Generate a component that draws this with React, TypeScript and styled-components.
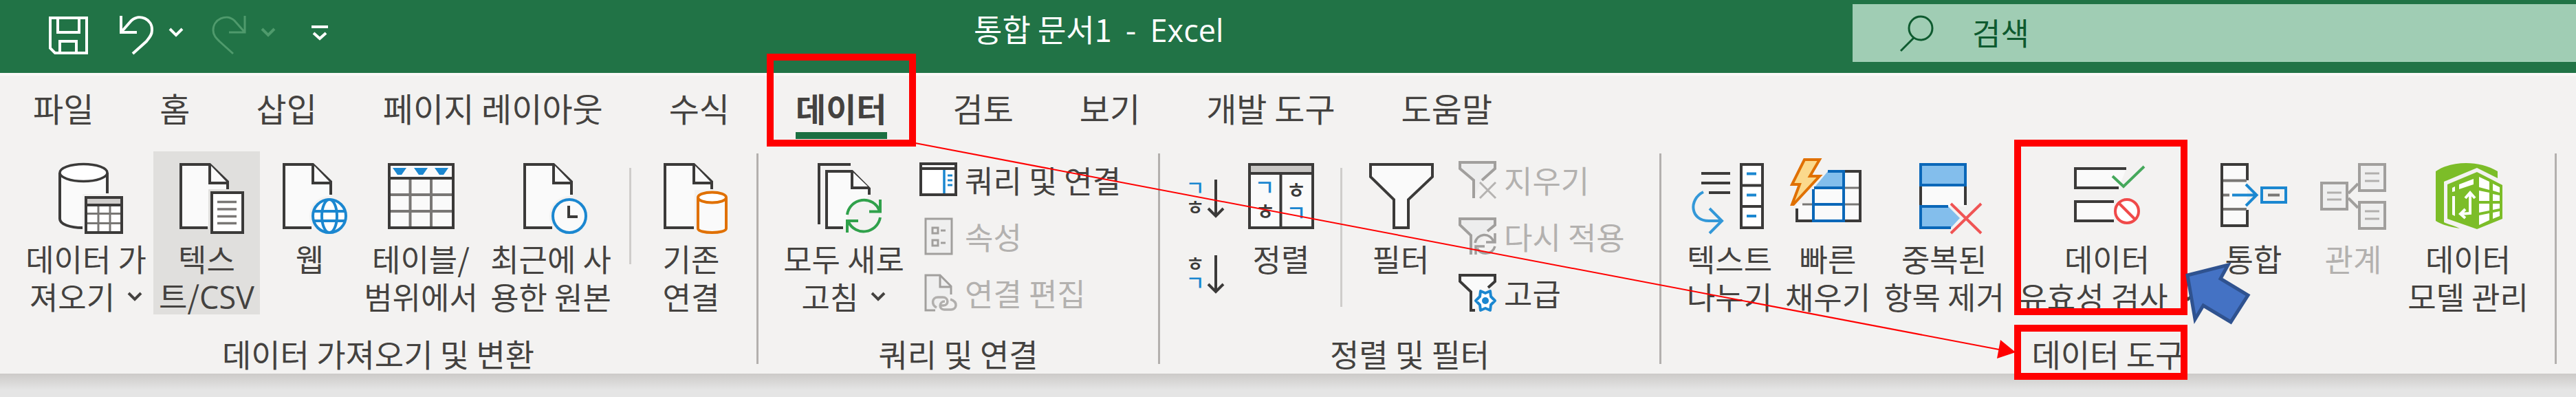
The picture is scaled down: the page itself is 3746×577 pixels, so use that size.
import React from "react";
import styled, { createGlobalStyle } from "styled-components";

const ink = "#3b3a39";
const grey = "#797775";
const faded = "#a19f9d";
const blue = "#1b87d0";
const deepBlue = "#0a67b8";
const skyFill = "#83beec";
const paper = "#fafafa";
const orange = "#e07000";
const fontStack = `"Noto Sans CJK KR", "Noto Sans", sans-serif`;

const GlobalStyle = createGlobalStyle`
  * { box-sizing: border-box; }
  body { margin: 0; background: #e5e5e5; font-family: ${fontStack}; overflow-x: hidden; }
  button, input { font: inherit; color: inherit; border: 0; padding: 0; margin: 0; background: none; }
  svg { display: block; flex: none; overflow: visible; }
`;

/* ---------- shell ---------- */

const Page = styled.div`
  position: relative;
  color: #444240;
`;

const TitleBar = styled.header`
  display: flex;
  align-items: flex-start;
  height: 106px;
  background: #217346;
  color: #fff;
`;

const QuickAccess = styled.div`
  display: flex;
  align-items: flex-start;
  padding: 22px 0 0 70px;
  width: 1416px;
`;

const QuickButton = styled.button<{ $gap?: number; $dim?: boolean }>`
  display: flex;
  margin-right: ${(p) => p.$gap ?? 0}px;
  color: ${(p) => (p.$dim ? "#4f9a6c" : "#fff")};
`;

const ChevronSlot = styled.span`
  display: flex;
  padding-top: 18px;
`;

const CustomizeSlot = styled.span`
  display: flex;
  padding-top: 14px;
`;

const Title = styled.h1`
  margin: 0;
  padding-top: 14px;
  flex: 1;
  font-size: 45px;
  line-height: 56px;
  font-weight: 400;
  white-space: pre;
`;

const Latin = styled.span`
  font-family: "Liberation Sans Narrow", "Open Sans", sans-serif;
`;

const SearchBox = styled.label`
  display: flex;
  align-items: center;
  gap: 56px;
  flex: 0 1 1052px;
  height: 84px;
  margin-top: 6px;
  padding-left: 68px;
  background: #a0cdb4;
  color: #0e5a2f;
`;

const SearchInput = styled.input`
  flex: 1;
  min-width: 0;
  height: 84px;
  padding-bottom: 4px;
  font-size: 45px;
  outline: none;
  &::placeholder { color: #0e5a2f; opacity: 1; }
`;

const Tabs = styled.nav`
  display: flex;
  gap: 96px;
  height: 114px;
  padding-left: 48px;
  background: #f3f2f1;
  border-top: 4px solid #faf8f7;
`;

const Tab = styled.button<{ $active?: boolean }>`
  position: relative;
  display: flex;
  flex-direction: column;
  gap: 6px;
  padding-top: 16px;
  font-size: 48px;
  line-height: 60px;
  font-weight: ${(p) => (p.$active ? 700 : 400)};
  white-space: nowrap;
  &::after {
    content: "";
    width: 100%;
    height: 10px;
    background: ${(p) => (p.$active ? "#1a6f41" : "transparent")};
  }
`;

const Ribbon = styled.main`
  display: flex;
  align-items: flex-start;
  height: 323px;
  background: #f3f2f1;
`;

const RibbonShadow = styled.div`
  height: 24px;
  background: linear-gradient(#cccac8, #e5e5e5);
`;

const Group = styled.section<{ $start: number; $end: number }>`
  flex: none;
  padding: 0 ${(p) => p.$end}px 0 ${(p) => p.$start}px;
`;

const GroupBody = styled.div`
  display: flex;
  height: 266px;
`;

const GroupLabel = styled.h2<{ $start: number; $end: number }>`
  margin: 0 -${(p) => p.$end}px 0 -${(p) => p.$start}px;
  text-align: center;
  font-size: 46px;
  line-height: 54px;
  font-weight: 400;
  white-space: nowrap;
`;

const GroupRule = styled.div`
  flex: none;
  width: 3px;
  height: 306px;
  margin-top: 3px;
  background: #b3b0ae;
`;

const InnerRule = styled.div<{ $height: number }>`
  width: 3px;
  height: ${(p) => p.$height}px;
  margin: 24px 14px 0;
  background: #cfcdcb;
`;

const BigButton = styled.button<{ $width: number; $active?: boolean }>`
  position: relative;
  display: flex;
  flex-direction: column;
  align-items: center;
  gap: 8px;
  flex: none;
  width: ${(p) => p.$width}px;
  height: 237px;
  padding-top: 10px;
  background: ${(p) => (p.$active ? "#e0dfdd" : "transparent")};
  font-size: 45px;
  line-height: 55px;
  white-space: nowrap;
  &:disabled { color: #b3b1af; }
`;

const Line = styled.span`
  display: flex;
  align-items: center;
  justify-content: center;
  gap: 18px;
  height: 55px;
`;

const Lines = styled.span`
  display: block;
`;

const Stack = styled.div<{ $start: number; $width: number }>`
  display: flex;
  flex-direction: column;
  align-items: flex-start;
  flex: none;
  width: ${(p) => p.$width}px;
  padding-left: ${(p) => p.$start}px;
`;

const SmallButton = styled.button`
  display: flex;
  align-items: center;
  gap: 11px;
  height: 82px;
  font-size: 45px;
  line-height: 55px;
  white-space: nowrap;
  &:disabled { color: #b3b1af; }
`;

const SortStack = styled.div`
  display: flex;
  flex-direction: column;
  gap: 55px;
  flex: none;
  width: 104px;
  padding: 41px 0 0 38px;
`;

const IconButton = styled.button`
  display: flex;
  width: 55px;
  height: 55px;
`;

/* ---------- callouts drawn over the ribbon ---------- */

const TabFrame = styled.span`
  position: absolute;
  z-index: 2;
  inset: -32px -42px 7px -42px;
  border: 10px solid #f00;
  pointer-events: none;
`;

const ButtonFrame = styled.span`
  position: absolute;
  z-index: 2;
  top: -17px;
  left: 0;
  width: 252px;
  height: 255px;
  border: 10px solid #f00;
  pointer-events: none;
`;

const LabelFrame = styled.span`
  position: absolute;
  z-index: 2;
  top: 252px;
  left: 0;
  width: 252px;
  height: 80px;
  border: 10px solid #f00;
  pointer-events: none;
`;

const Pointer = styled.svg`
  position: absolute;
  z-index: 3;
  top: 158px;
  left: 246px;
  pointer-events: none;
`;

const Connector = styled.svg`
  position: absolute;
  z-index: 3;
  top: 200px;
  left: 1330px;
  pointer-events: none;
`;

/* ---------- icons ---------- */

const Chevron = () => (
  <svg width="22" height="14" viewBox="0 0 22 14" fill="none" stroke="currentColor" strokeWidth="4">
    <path d="M2 2 L11 11 L20 2" />
  </svg>
);

const QuickChevron = () => (
  <ChevronSlot>
    <Chevron />
  </ChevronSlot>
);

const Icon = ({ children }: { children: React.ReactNode }) => (
  <svg width="110" height="110" viewBox="0 0 110 110" fill="none" stroke={ink} strokeWidth="4" aria-hidden>
    {children}
  </svg>
);

const SmallIcon = ({ children, color = ink }: { children: React.ReactNode; color?: string }) => (
  <svg width="56" height="56" viewBox="0 0 56 56" fill="none" stroke={color} strokeWidth="4" aria-hidden>
    {children}
  </svg>
);

const Sheet = ({ side, foot }: { side: number; foot: number }) => (
  <>
    <path d={`M${foot} 101 H17 V9 H59 L85 34 V${side}`} fill={paper} />
    <path d="M59 9 V36 H85" fill={paper} />
  </>
);

const GetDataIcon = () => (
  <Icon>
    <path d="M17 21 V88 C17 96 32 101 50 101 L86 60 V21" fill={paper} stroke="none" />
    <path d="M17 21 V88 C17 96 32 101 50 101 M86 21 V51" />
    <ellipse cx="51.5" cy="21" rx="34.5" ry="12.5" fill="#fff" strokeWidth="3.5" />
    <rect x="50" y="52" width="60" height="58" fill="#f3f2f1" stroke="none" />
    <rect x="55" y="57" width="52" height="51" fill="#fff" />
    <rect x="57" y="59" width="48" height="9" fill="#d0cecc" stroke="none" />
    <path d="M55 68 H107" />
    <path d="M73 70 V106 M90 70 V106 M57 80.5 H105 M57 94.5 H105" stroke={grey} strokeWidth="3" />
  </Icon>
);

const TextFileIcon = () => (
  <Icon>
    <Sheet side={45} foot={56} />
    <rect x="57" y="45" width="53" height="65" fill="#e0dfdd" stroke="none" />
    <rect x="62" y="50" width="45" height="58" fill="#fff" />
    <path d="M70 63.5 H98 M70 74 H98 M70 84.5 H98 M70 94.5 H98" stroke={grey} strokeWidth="3.5" />
  </Icon>
);

const WebIcon = () => (
  <Icon>
    <Sheet side={53} foot={57} />
    <circle cx="83" cy="84" r="29" fill="#f3f2f1" stroke="none" />
    <g stroke={blue}>
      <circle cx="83" cy="84" r="24" fill="#fff" />
      <ellipse cx="83" cy="84" rx="11" ry="24" />
      <path d="M60 77 H106 M60 91 H106" />
    </g>
  </Icon>
);

const TableIcon = () => (
  <Icon>
    <rect x="9" y="9" width="93" height="92" fill={paper} />
    <path d="M39.5 31 V99 M70 31 V99 M11 53 H100 M11 77 H100" stroke={grey} />
    <path d="M9 29 H102" />
    <path d="M14 14 H34 L27 24 H21 Z M45 14 H65 L58 24 H52 Z M75 14 H95 L88 24 H82 Z" fill={blue} stroke="none" />
  </Icon>
);

const RecentIcon = () => (
  <Icon>
    <Sheet side={53} foot={57} />
    <circle cx="82" cy="84" r="29" fill="#f3f2f1" stroke="none" />
    <circle cx="82" cy="84" r="24" fill={paper} stroke={blue} />
    <path d="M81 69 V85 H94" />
  </Icon>
);

const ExistingIcon = () => (
  <Icon>
    <Sheet side={45} foot={59} />
    <rect x="60" y="46" width="50" height="64" fill="#f3f2f1" stroke="none" />
    <g stroke={orange}>
      <path d="M65 57 V102 C65 110 106 110 106 102 V57" fill={paper} />
      <ellipse cx="85.5" cy="57" rx="20.5" ry="7.5" fill="#fff" />
    </g>
  </Icon>
);

const RefreshAllIcon = () => (
  <Icon>
    <path d="M65 9 H19 V96" />
    <path d="M54 101 H30 V19 H67 L92 44 V53" fill={paper} />
    <path d="M67 19 V43 H92" fill={paper} />
    <path d="M60 82 A24 24 0 0 1 107 76 L107 100 H60 Z" fill="#f3f2f1" stroke="none" />
    <g stroke="#30a14b">
      <path d="M60 82 A24.5 24.5 0 0 1 107 76 M108 60 V77.5 H92" />
      <path d="M108 86 A24.5 24.5 0 0 1 62 93 M60 108 V91 H76" />
    </g>
  </Icon>
);

const QueryIcon = () => (
  <SmallIcon>
    <rect x="3" y="5" width="51" height="45" fill="#fff" />
    <path d="M3 12 H54" />
    <path d="M37 14 V48" stroke={blue} strokeWidth="3.5" />
    <path d="M42 22 H49 M42 29 H49 M42 36 H49" stroke={blue} strokeWidth="3" />
  </SmallIcon>
);

const PropertiesIcon = () => (
  <SmallIcon color={faded}>
    <rect x="10" y="3" width="38" height="51" fill="#efefef" strokeWidth="3" />
    <path d="M20 16 H28 V24 H20 Z M20 34 H28 V42 H20 Z M32 20 H39 M32 38 H39" strokeWidth="3" />
  </SmallIcon>
);

const EditLinksIcon = () => (
  <SmallIcon color={faded}>
    <path d="M24 54 H10 V3 H31 L47 19 V31" fill="#efefef" strokeWidth="3" />
    <path d="M31 3 V20 H47" strokeWidth="3" />
    <path d="M26 50 C18 46 19 35 28 35 H35 C44 35 44 47 36 47 H32" strokeWidth="3.5" stroke="#b1afad" />
    <path d="M46 38 C58 42 55 53 47 53 H37 C29 53 29 41 38 41" strokeWidth="3.5" stroke="#b1afad" />
  </SmallIcon>
);

type JamoProps = { x: number; y: number; color?: string; size?: number; children: string };

const Jamo = ({ x, y, color = ink, size = 30, children }: JamoProps) => (
  <text x={x} y={y} fill={color} stroke="none" fontSize={size} fontWeight="500" textAnchor="middle" fontFamily={fontStack}>
    {children}
  </text>
);

const SortIcon = ({ descending }: { descending?: boolean }) => (
  <SmallIcon>
    <Jamo x={13} y={23} color={descending ? ink : blue}>{descending ? "ㅎ" : "ㄱ"}</Jamo>
    <Jamo x={13} y={51} color={descending ? blue : ink}>{descending ? "ㄱ" : "ㅎ"}</Jamo>
    <path d="M43 0 V53 M32 42 L43 53 L54 42" />
  </SmallIcon>
);

const SortDialogIcon = () => (
  <Icon>
    <rect x="9" y="9" width="92" height="92" fill={paper} />
    <rect x="11" y="11" width="88" height="10" fill="#c8c6c4" stroke="none" />
    <path d="M9 22 H101 M54.5 22 V101" />
    <Jamo x={31} y={54} size={32} color={blue}>ㄱ</Jamo>
    <Jamo x={32} y={89} size={32}>ㅎ</Jamo>
    <Jamo x={77} y={58} size={32}>ㅎ</Jamo>
    <Jamo x={77} y={91} size={32} color={blue}>ㄱ</Jamo>
  </Icon>
);

const FilterIcon = () => (
  <Icon>
    <path d="M11 9 H101 V27 L66 60 V101 H45 V60 L11 27 Z" fill={paper} />
  </Icon>
);

const ClearIcon = () => (
  <SmallIcon color={faded}>
    <path d="M23 55 V29 L3 12 V3 H54 V12 L35 29" fill="#ededed" />
    <path d="M32 32 L55 55 M55 32 L32 55" stroke="#b5b3b1" strokeWidth="3" />
  </SmallIcon>
);

const ReapplyIcon = () => (
  <SmallIcon color={faded}>
    <path d="M19 55 V27 L3 12 V3 H54 V12 L43 21" fill="#ededed" />
    <path d="M25 38 C28 24 46 22 52 36 M54 24 V37 H41 M54 43 C50 56 34 56 28 46 M26 55 V43 H39" strokeWidth="3.5" />
  </SmallIcon>
);

const AdvancedIcon = () => (
  <SmallIcon>
    <path d="M25 54 H19 V27 L3 12 V3 H54 V12 L44 21" fill={paper} />
    <path
      d="M33 26 L40 29 L47 26 L48 34 L54 40 L48 46 L47 54 L40 51 L33 54 L32 46 L26 40 L32 34 Z"
      fill="#fff"
      stroke={blue}
      strokeLinejoin="round"
    />
    <circle cx="40" cy="40" r="5" fill={blue} stroke="none" />
  </SmallIcon>
);

const TextToColumnsIcon = () => (
  <Icon>
    <path d="M14 22 H56 M14 36 H56 M25 50 H56" />
    <path d="M17 49 C-5 60 -2 91 25 91 H44 M26 73 L44 91 L26 109" stroke="#3398d8" />
    <rect x="72" y="9" width="31" height="92" fill="#fff" />
    <path d="M72 39.5 H103 M72 70 H103" />
    <path d="M80 22.5 H94 M80 53.5 H94 M80 84 H94" stroke={blue} />
  </Icon>
);

const FlashFillIcon = () => (
  <Icon>
    <path d="M35 43 H102 V91 H10 V67 H35 Z M78 19 H102 V43 H78 Z" fill={paper} stroke="none" />
    <path d="M55 19 H78 V43 H35 Z" fill={skyFill} stroke="none" />
    <path d="M80 43 H101 M80 67 H101 M18 67 H34" stroke={grey} strokeWidth="3" />
    <path d="M78 19 H102 V91 H78 M34 91 H10 V73" />
    <path d="M55 19 H78 V91 H34 V45 M35 43 H78 M34 67 H78" stroke={deepBlue} />
    <path d="M21 2 H43 L29 26 H43 L5 67 H3 L14 38 H3 Z" fill="#fbd98c" stroke={orange} />
  </Icon>
);

const RemoveDuplicatesIcon = () => (
  <Icon>
    <rect x="21" y="39" width="66" height="31" fill={paper} stroke="none" />
    <path d="M21 39 V70 M86 39 V68" />
    <path d="M61 70 L78 87 L65 101 H21 V70 Z" fill={skyFill} stroke="none" />
    <rect x="21" y="9" width="65" height="30" fill={skyFill} stroke={deepBlue} />
    <path d="M61 70 H21 V101 H65" stroke={deepBlue} />
    <path d="M65 66 L109 109 M109 66 L65 109" stroke="#f05454" />
  </Icon>
);

const ValidationIcon = () => (
  <Icon>
    <path d="M83 15 H9 V43 H72" fill={paper} />
    <path d="M65 63 H9 V91 H65" fill={paper} />
    <path d="M63 26 L79 41 L109 12" stroke="#45a85b" />
    <circle cx="84" cy="77" r="17" fill="#fff" stroke="#f04a4a" />
    <path d="M72 65 L96 89" stroke="#f04a4a" />
  </Icon>
);

const ConsolidateIcon = () => (
  <Icon>
    <rect x="9" y="9" width="37" height="89" fill={paper} stroke="none" />
    <path d="M46 32 V9 H9 V98 H46 V75" />
    <path d="M11 32.5 H45 M11 74 H45 M11 53.5 H20 M76 53.5 H93" stroke={grey} />
    <path d="M24 53.5 H59 M44 38 L59.5 53.5 L44 69" stroke={blue} />
    <rect x="67" y="43" width="35" height="21" stroke={blue} />
  </Icon>
);

const RelationsIcon = () => (
  <Icon>
    <g stroke={faded}>
      <path d="M48 51 L62 37 M48 58 L62 72" />
      <path d="M9 36 H46 V74 H9 Z M64 9 H101 V47 H64 Z M64 64 H101 V102 H64 Z" fill="#efefef" />
      <path d="M17 50 H38 M17 60 H38 M72 22 H93 M72 33 H93 M72 77 H93 M72 88 H93" strokeWidth="3" stroke="#b1afad" />
    </g>
  </Icon>
);

const DataModelIcon = () => (
  <Icon>
    <g stroke="none">
      <path d="M8 19 C32 3 72 3 98 19 V29 L68 14 L20 34 V93 C28 97 36 98 43 102 C28 100 16 96 8 91 Z" fill="#7cbd28" />
      <path d="M68 20 L105 39 V88 L68 103 L25 88 V38 Z" fill="#7cbd28" />
      <path d="M71 27 L86 34 V46 L71 42 Z M91 37 L101 42 V50 L91 47 Z M71 47 L86 50 V62 H71 Z M91 52 L101 54 V62 H91 Z M71 66 H86 V76 L71 79 Z M91 66 H101 V73 L91 75 Z M71 83 L86 80 V90 L71 97 Z M91 79 L101 77 V84 L91 88 Z" fill="#fff" />
      <path d="M42 38 L63 30 V38 L42 45 Z M32 43 L36 41 V48 L32 49 Z M32 55 H36 V84 L32 82 Z" fill="#fff" />
    </g>
    <path d="M58 52 V80 L44 81 M51 58 L58 50 L65 58 M51 74 L44 81 L51 87" stroke="#fff" />
  </Icon>
);

const SaveIcon = () => (
  <svg width="58" height="58" viewBox="0 0 58 58" fill="none" stroke="currentColor" strokeWidth="4">
    <path d="M3 4 H56 V55 H10 L3 48 Z M14 4 V25 H45 V4 M17 55 V38 H41 V55" />
  </svg>
);

const UndoIcon = () => (
  <svg width="52" height="60" viewBox="0 0 52 60" fill="none" stroke="currentColor" strokeWidth="4">
    <path d="M3 1 V25 H26 M3 25 L18 8 C30 -3 49 6 48 22 C48 29 44 33 40 38 L20 56" />
  </svg>
);

const RedoIcon = () => (
  <svg width="52" height="60" viewBox="0 0 52 60" fill="none" stroke="currentColor" strokeWidth="3">
    <path d="M49 1 V25 H26 M49 25 L34 8 C22 -3 3 6 3 22 C3 29 7 33 12 38 L32 56" />
  </svg>
);

const CustomizeIcon = () => (
  <svg width="26" height="24" viewBox="0 0 26 24" fill="none" stroke="currentColor" strokeWidth="4">
    <path d="M1 3 H25 M4 12 L13 20 L22 12" />
  </svg>
);

const SearchIcon = () => (
  <svg width="50" height="56" viewBox="0 0 50 56" fill="none" stroke="currentColor" strokeWidth="3">
    <circle cx="31" cy="21" r="17" />
    <path d="M21 35 L2 54" />
  </svg>
);

/* ---------- ribbon parts ---------- */

type BigProps = {
  width: number;
  icon: React.ReactNode;
  lines: React.ReactNode[];
  menu?: boolean;
  active?: boolean;
  disabled?: boolean;
  children?: React.ReactNode;
};

const Big = ({ width, icon, lines, menu, active, disabled, children }: BigProps) => (
  <BigButton type="button" $width={width} $active={active} disabled={disabled}>
    {icon}
    <Lines>
      {lines.map((line, i) => (
        <Line key={i}>
          <span>{line}</span>
          {menu && i === lines.length - 1 && <Chevron />}
        </Line>
      ))}
    </Lines>
    {children}
  </BigButton>
);

const Small = ({ icon, label, disabled }: { icon: React.ReactNode; label: string; disabled?: boolean }) => (
  <SmallButton type="button" disabled={disabled}>
    {icon}
    {label}
  </SmallButton>
);

type GroupProps = { label: string; start: number; end: number; children: React.ReactNode };

const RibbonGroup = ({ label, start, end, children }: GroupProps) => (
  <>
    <Group $start={start} $end={end}>
      <GroupBody>{children}</GroupBody>
      <GroupLabel $start={start} $end={end}>{label}</GroupLabel>
    </Group>
    <GroupRule />
  </>
);

const tabs = ["파일", "홈", "삽입", "페이지 레이아웃", "수식", "데이터", "검토", "보기", "개발 도구", "도움말"];

export default function App() {
  return (
    <Page>
      <GlobalStyle />
      <TitleBar>
        <QuickAccess>
          <QuickButton type="button" aria-label="저장" $gap={45}><SaveIcon /></QuickButton>
          <QuickButton type="button" aria-label="실행 취소" $gap={20}><UndoIcon /></QuickButton>
          <QuickButton type="button" aria-label="실행 취소 목록" $gap={40}><QuickChevron /></QuickButton>
          <QuickButton type="button" aria-label="다시 실행" $gap={20} $dim><RedoIcon /></QuickButton>
          <QuickButton type="button" aria-label="다시 실행 목록" $gap={51} $dim><QuickChevron /></QuickButton>
          <QuickButton type="button" aria-label="빠른 실행 도구 모음 사용자 지정">
            <CustomizeSlot><CustomizeIcon /></CustomizeSlot>
          </QuickButton>
        </QuickAccess>
        <Title>통합 문서1  -  <Latin>Excel</Latin></Title>
        <SearchBox>
          <SearchIcon />
          <SearchInput type="search" placeholder="검색" aria-label="검색" />
        </SearchBox>
      </TitleBar>

      <Tabs>
        {tabs.map((name) => (
          <Tab key={name} type="button" $active={name === "데이터"}>
            {name}
            {name === "데이터" && <TabFrame />}
          </Tab>
        ))}
      </Tabs>

      <Ribbon>
        <RibbonGroup label="데이터 가져오기 및 변환" start={27} end={22}>
          <Big width={196} icon={<GetDataIcon />} lines={["데이터 가", "져오기"]} menu />
          <Big width={155} icon={<TextFileIcon />} lines={["텍스", <>트/<Latin>CSV</Latin></>]} active />
          <Big width={145} icon={<WebIcon />} lines={["웹"]} />
          <Big width={178} icon={<TableIcon />} lines={["테이블/", "범위에서"]} />
          <Big width={200} icon={<RecentIcon />} lines={["최근에 사", "용한 원본"]} />
          <InnerRule $height={140} />
          <Big width={146} icon={<ExistingIcon />} lines={["기존", "연결"]} />
        </RibbonGroup>

        <RibbonGroup label="쿼리 및 연결" start={24} end={24}>
          <Big width={200} icon={<RefreshAllIcon />} lines={["모두 새로", "고침"]} menu />
          <Stack $start={9} $width={333}>
            <Small icon={<QueryIcon />} label="쿼리 및 연결" />
            <Small icon={<PropertiesIcon />} label="속성" disabled />
            <Small icon={<EditLinksIcon />} label="연결 편집" disabled />
          </Stack>
        </RibbonGroup>

        <RibbonGroup label="정렬 및 필터" start={0} end={22}>
          <SortStack>
            <IconButton type="button" aria-label="오름차순 정렬"><SortIcon /></IconButton>
            <IconButton type="button" aria-label="내림차순 정렬"><SortIcon descending /></IconButton>
          </SortStack>
          <Big width={144} icon={<SortDialogIcon />} lines={["정렬"]} />
          <InnerRule $height={202} />
          <Big width={142} icon={<FilterIcon />} lines={["필터"]} />
          <Stack $start={12} $width={283}>
            <Small icon={<ClearIcon />} label="지우기" disabled />
            <Small icon={<ReapplyIcon />} label="다시 적용" disabled />
            <Small icon={<AdvancedIcon />} label="고급" />
          </Stack>
        </RibbonGroup>

        <RibbonGroup label="데이터 도구" start={23} end={26}>
          <Big width={152} icon={<TextToColumnsIcon />} lines={["텍스트", "나누기"]} />
          <Big width={134} icon={<FlashFillIcon />} lines={["빠른", "채우기"]} />
          <Big width={204} icon={<RemoveDuplicatesIcon />} lines={["중복된", "항목 제거"]} />
          <Big width={270} icon={<ValidationIcon />} lines={["데이터", "유효성 검사"]} menu>
            <ButtonFrame />
            <LabelFrame />
            <Pointer width="100" height="100" viewBox="0 0 100 100" fill="#4472c4" stroke="#2f528f" strokeWidth="5">
              <path d="M6 22 L65 7 L54 27 L94 51 L69 90 L29 66 L17 86 Z" />
            </Pointer>
          </Big>
          <Big width={156} icon={<ConsolidateIcon />} lines={["통합"]} />
          <Big width={134} icon={<RelationsIcon />} lines={["관계"]} disabled />
          <Big width={200} icon={<DataModelIcon />} lines={["데이터", "모델 관리"]} />
        </RibbonGroup>
      </Ribbon>
      <RibbonShadow />

      <Connector width="1602" height="330" viewBox="0 0 1602 330" aria-hidden>
        <path d="M1 8 L1577 308" stroke="#f00" strokeWidth="2" />
        <path d="M1601 312 L1579 294 L1574 321 Z" fill="#f00" />
      </Connector>
    </Page>
  );
}
